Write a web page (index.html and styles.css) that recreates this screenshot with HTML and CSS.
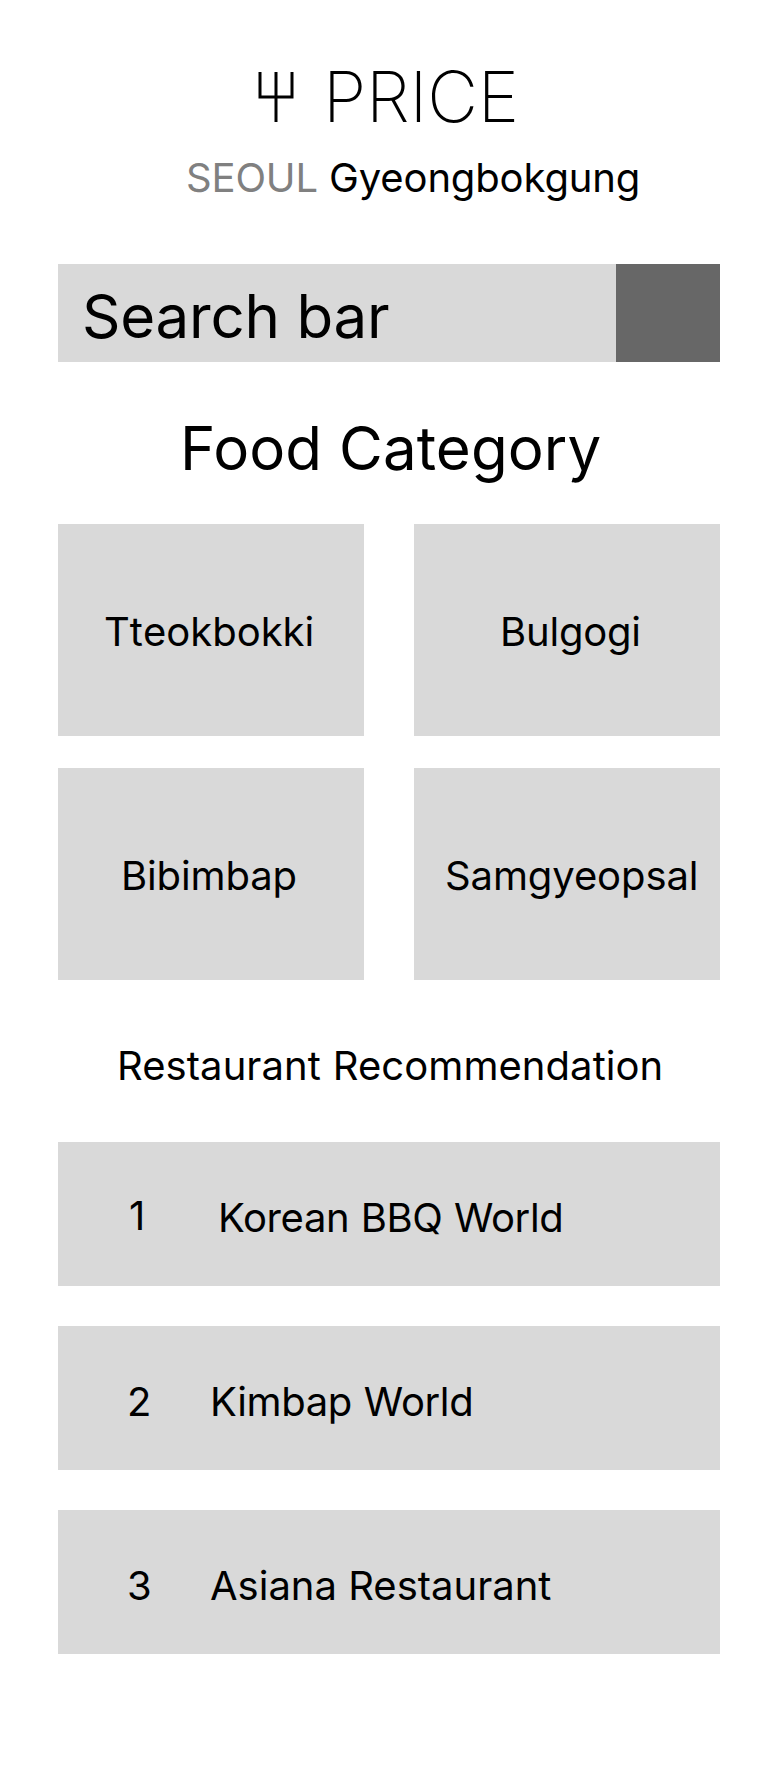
FILE: index.html
```html
<!DOCTYPE html>
<html lang="en">
<head>
<meta charset="utf-8">
<title>PRICE</title>
<link rel="stylesheet" href="styles.css">
</head>
<body>
<main class="page">
  <header class="brand">
    <svg class="logo" width="40" height="50" viewBox="0 0 40 50" fill="none" stroke="#000" stroke-width="3"><path d="M4 0V25H36V0M20 0V50"/></svg>
    <h1 class="name">PRICE</h1>
  </header>
  <p class="place"><span class="city">SEOUL</span> Gyeongbokgung</p>
  <form class="search"><label class="field">Search bar</label><button class="submit" type="button" aria-label="Search"></button></form>
  <h2 class="heading">Food Category</h2>
  <section class="grid">
    <div class="card tteok">Tteokbokki</div>
    <div class="card bul">Bulgogi</div>
    <div class="card bib">Bibimbap</div>
    <div class="card sam">Samgyeopsal</div>
  </section>
  <h3 class="subheading">Restaurant Recommendation</h3>
  <section class="list">
    <div class="row first"><span class="rank">1</span><span class="title">Korean BBQ World</span></div>
    <div class="row second"><span class="rank">2</span><span class="title">Kimbap World</span></div>
    <div class="row"><span class="rank">3</span><span class="title">Asiana Restaurant</span></div>
  </section>
</main>
</body>
</html>
```
FILE: styles.css
```css
* { box-sizing: border-box; }
body { margin: 0; background: #fff; color: #000; font-family: Inter, sans-serif; font-size: 40px; line-height: 48px; }
h1, h2, h3, p { margin: 0; font-weight: 400; white-space: nowrap; }
.page { width: 780px; height: 1768px; padding: 54px 60px 0 58px; }
.brand { display: flex; height: 88px; padding-left: 198px; }
.logo { margin-top: 18px; }
.name { margin-left: 27px; font-size: 70px; line-height: 85px; font-weight: 200; letter-spacing: -0.2px; }
.place { height: 48px; margin-top: 12px; padding-left: 128px; letter-spacing: -0.14px; }
.city { color: #808080; }
.search { display: flex; margin-top: 62px; height: 98px; background: #d9d9d9; }
.field { flex: 1; padding: 16px 0 0 24px; font-size: 60px; line-height: 73px; letter-spacing: -0.22px; }
.submit { width: 104px; border: 0; background: #676767; }
.heading { margin-top: 50px; padding-left: 122px; font-size: 60px; line-height: 73px; height: 112px; letter-spacing: 0.08px; }
.grid { display: grid; grid-template-columns: 306px 306px; gap: 32px 50px; }
.card { height: 212px; padding-top: 84px; }
.card, .row { background: #d9d9d9; }
.tteok { padding-left: 46px; font-kerning: none; }
.bul { padding-left: 86px; letter-spacing: -0.2px; }
.bib { padding-left: 63px; letter-spacing: -0.12px; }
.sam { padding-left: 31px; letter-spacing: -0.1px; }
.subheading { margin-top: 62px; height: 100px; padding-left: 59px; font-size: 40px; letter-spacing: 0.06px; word-spacing: 0.6px; }
.list { display: flex; flex-direction: column; gap: 40px; }
.row { display: flex; height: 144px; padding: 52px 0 0 69px; }
.rank { width: 83px; }
.first .rank { margin-top: -2px; padding-left: 2px; }
.first .title { padding-left: 8px; letter-spacing: -0.36px; word-spacing: 0.5px; }
.second .title { letter-spacing: -0.35px; word-spacing: 1px; }
```
